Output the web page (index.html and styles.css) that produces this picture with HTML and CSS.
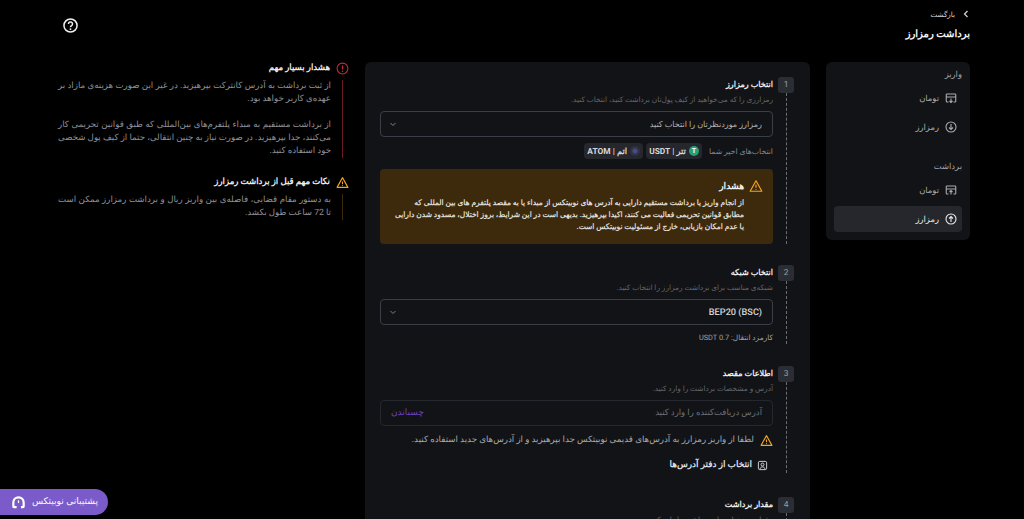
FILE: index.html
```html
<!DOCTYPE html>
<html lang="fa" dir="rtl">
<head>
<meta charset="utf-8">
<title>برداشت رمزارز</title>
<link rel="stylesheet" href="styles.css">
</head>
<body>
<svg class="defs" width="0" height="0" aria-hidden="true">
  <defs>
    <symbol id="warn" viewBox="0 0 24 24"><path d="M12 3 2 21h20L12 3Z" fill="none" stroke="currentColor" stroke-width="2" stroke-linejoin="round"/><path d="M12 10v5M12 17.2v1.3" stroke="currentColor" stroke-width="2" fill="none"/></symbol>
    <symbol id="chev" viewBox="0 0 12 12"><path d="M3.500 5 6 7.500 8.500 5" fill="none" stroke="currentColor" stroke-width="1"/></symbol>
    <symbol id="card-down" viewBox="0 0 24 24"><path d="M17 20h3a1.500 1.500 0 0 0 1.500-1.500V5.500A1.500 1.500 0 0 0 20 4H4a1.500 1.500 0 0 0-1.500 1.500v13A1.500 1.500 0 0 0 4 20h3M2.500 10h19M12 13v8M9 18l3 3 3-3" fill="none" stroke="currentColor" stroke-width="2.200"/></symbol>
    <symbol id="card-up" viewBox="0 0 24 24"><path d="M17 20h3a1.500 1.500 0 0 0 1.500-1.500V5.500A1.500 1.500 0 0 0 20 4H4a1.500 1.500 0 0 0-1.500 1.500v13A1.500 1.500 0 0 0 4 20h3M2.500 10h19M12 21v-8M9 16l3-3 3 3" fill="none" stroke="currentColor" stroke-width="2.200"/></symbol>
    <symbol id="circle-down" viewBox="0 0 24 24"><circle cx="12" cy="12" r="10" fill="none" stroke="currentColor" stroke-width="2.200"/><path d="M12 6v11M8 13l4 4 4-4" fill="none" stroke="currentColor" stroke-width="2.200"/></symbol>
    <symbol id="circle-up" viewBox="0 0 24 24"><circle cx="12" cy="12" r="10" fill="none" stroke="currentColor" stroke-width="2.200"/><path d="M12 18V7M8 11l4-4 4 4" fill="none" stroke="currentColor" stroke-width="2.200"/></symbol>
  </defs>
</svg>

<div class="page">
  <aside class="side">
    <header class="head">
      <a class="back"><svg class="back-ico" viewBox="0 0 8 8"><path d="M5.500 1 2.500 4l3 3" fill="none" stroke="currentColor" stroke-width="1.200"/></svg><span>بازگشت</span></a>
      <h1 class="title">برداشت رمزارز</h1>
    </header>
    <nav class="menu">
      <div class="menu-label">واریز</div>
      <a class="menu-item"><svg class="menu-ico"><use href="#card-down"/></svg><span>تومان</span></a>
      <a class="menu-item"><svg class="menu-ico"><use href="#circle-down"/></svg><span>رمزارز</span></a>
      <div class="menu-label second">برداشت</div>
      <a class="menu-item"><svg class="menu-ico"><use href="#card-up"/></svg><span>تومان</span></a>
      <a class="menu-item active"><svg class="menu-ico"><use href="#circle-up"/></svg><span>رمزارز</span></a>
    </nav>
  </aside>

  <main class="card">
    <section class="step">
      <div class="rail"><span class="num">1</span></div>
      <div class="body">
        <h2 class="step-title">انتخاب رمزارز</h2>
        <p class="hint">رمزارزی را که می‌خواهید از کیف پول‌تان برداشت کنید، انتخاب کنید.</p>
        <div class="field"><span class="value muted">رمزارز موردنظرتان را انتخاب کنید</span><svg class="chev"><use href="#chev"/></svg></div>
        <div class="recent">
          <span class="recent-label">انتخاب‌های اخیر شما</span>
          <span class="chip"><i class="coin usdt">T</i>تتر | USDT</span>
          <span class="chip"><i class="coin atom"></i>اتم | ATOM</span>
        </div>
        <div class="alert">
          <div class="alert-head"><svg class="alert-ico"><use href="#warn"/></svg><strong>هشدار</strong></div>
          <p class="alert-text">از انجام واریز یا برداشت مستقیم دارایی به آدرس های نوبیتکس از مبداء یا به مقصد پلتفرم های بین المللی که مطابق قوانین تحریمی فعالیت می کنند، اکیدا بپرهیزید. بدیهی است در این شرایط، بروز اختلال، مسدود شدن دارایی یا عدم امکان بازیابی، خارج از مسئولیت نوبیتکس است.</p>
        </div>
      </div>
    </section>

    <section class="step">
      <div class="rail"><span class="num">2</span></div>
      <div class="body">
        <h2 class="step-title">انتخاب شبکه</h2>
        <p class="hint">شبکه‌ی مناسب برای برداشت رمزارز را انتخاب کنید.</p>
        <div class="field"><span class="value" dir="ltr">BEP20 (BSC)</span><svg class="chev"><use href="#chev"/></svg></div>
        <p class="fee">کارمزد انتقال: <span dir="ltr">USDT 0.7</span></p>
      </div>
    </section>

    <section class="step">
      <div class="rail"><span class="num">3</span></div>
      <div class="body">
        <h2 class="step-title">اطلاعات مقصد</h2>
        <p class="hint">آدرس و مشخصات برداشت را وارد کنید.</p>
        <div class="field dim"><span class="value faint">آدرس دریافت‌کننده را وارد کنید</span><span class="paste">چسباندن</span></div>
        <div class="note"><svg class="note-ico"><use href="#warn"/></svg><span>لطفا از واریز رمزارز به آدرس‌های قدیمی نوبیتکس جدا بپرهیزید و از آدرس‌های جدید استفاده کنید.</span></div>
        <a class="book">
          <svg class="book-ico" viewBox="0 0 24 24"><rect x="3" y="3" width="18" height="18" rx="3" fill="none" stroke="currentColor" stroke-width="2"/><circle cx="12" cy="10" r="3.200" fill="none" stroke="currentColor" stroke-width="2"/><path d="M6.500 20c.6-3.500 2.800-5 5.500-5s4.900 1.500 5.500 5" fill="none" stroke="currentColor" stroke-width="2"/></svg>
          <span>انتخاب از دفتر آدرس‌ها</span>
        </a>
      </div>
    </section>

    <section class="step">
      <div class="rail"><span class="num">4</span></div>
      <div class="body">
        <h2 class="step-title">مقدار برداشت</h2>
        <p class="hint">مقدار موردنظر برای برداشت را وارد کنید.</p>
      </div>
    </section>
  </main>

  <aside class="notes">
    <div class="help-row">
      <svg class="help" viewBox="0 0 24 24"><circle cx="12" cy="12" r="10.500" fill="none" stroke="currentColor" stroke-width="2.400"/><path d="M8.800 9.500a3.200 3.200 0 1 1 4.900 2.700c-1.100.7-1.700 1.300-1.700 2.600" fill="none" stroke="currentColor" stroke-width="2.400"/><circle cx="12" cy="17.800" r="1.400" fill="currentColor"/></svg>
    </div>
    <section class="notice">
      <div class="notice-head">
        <svg class="notice-ico red" viewBox="0 0 24 24"><circle cx="12" cy="12" r="10" fill="none" stroke="currentColor" stroke-width="2"/><path d="M12 6.500v7" stroke="currentColor" stroke-width="2.400"/><circle cx="12" cy="17" r="1.500" fill="currentColor"/></svg>
        <h3 class="notice-title">هشدار بسیار مهم</h3>
      </div>
      <div class="notice-body red-line">
        <p>از ثبت برداشت به آدرس کانترکت بپرهیزید. در غیر این صورت هزینه‌ی مازاد بر عهده‌ی کاربر خواهد بود.</p>
        <p>از برداشت مستقیم به مبداء پلتفرم‌های بین‌المللی که طبق قوانین تحریمی کار می‌کنند، جدا بپرهیزید. در صورت نیاز به چنین انتقالی، حتما از کیف پول شخصی خود استفاده کنید.</p>
      </div>
    </section>
    <section class="notice">
      <div class="notice-head">
        <svg class="notice-ico amber"><use href="#warn"/></svg>
        <h3 class="notice-title">نکات مهم قبل از برداشت رمزارز</h3>
      </div>
      <div class="notice-body amber-line">
        <p>به دستور مقام قضایی، فاصله‌ی بین واریز ریال و برداشت رمزارز ممکن است تا 72 ساعت طول بکشد.</p>
      </div>
    </section>
  </aside>
</div>

<a class="support">
  <span class="support-text">پشتیبانی نوبیتکس</span>
  <svg class="support-ico" viewBox="0 0 24 24"><path fill-rule="evenodd" d="M12 2a10 10 0 0 1 10 10v6c0 2-1 3-3 3h-3v-3.500h2.500V12a6.500 6.500 0 0 0-13 0v5.500H9V21H5c-2 0-3-1-3-3v-6A10 10 0 0 1 12 2Z" fill="currentColor"/><path d="M12 8.500V13" stroke="currentColor" stroke-width="2"/></svg>
</a>
</body>
</html>
```

FILE: styles.css
```css
* { box-sizing: border-box; }
html, body { height: 100%; }
body {
  margin: 0;
  background: #000;
  color: #e8e8ea;
  font-family: Roboto, "Noto Sans", sans-serif;
  font-size: 8.400px;
  text-rendering: geometricPrecision;
  overflow: hidden;
}
p, h1, h2, h3 { margin: 0; }
.defs { position: absolute; }
.page {
  display: flex;
  align-items: flex-start;
  gap: 16px;
  padding: 0 54px 0 0;
  height: 519px;
  overflow: hidden;
}

/* right column */
.side { width: 144px; flex: none; }
.head { height: 62px; padding-top: 8px; }
.back { display: flex; align-items: center; gap: 7px; color: #d5d5d8; font-size: 7.200px; height: 12px; }
.back-ico { width: 8px; height: 8px; }
.title { font-size: 10px; font-weight: 700; color: #f4f4f5; margin-top: 6px; line-height: 18px; }
.menu {
  background: #121316;
  border-radius: 6px;
  padding: 7px 8px 8px;
  height: 178px;
}
.menu-label { font-size: 8.400px; color: #a1a3a9; line-height: 12px; height: 13px; }
.menu-label.second { margin-top: 21px; }
.menu-item {
  display: flex;
  align-items: center;
  gap: 6px;
  height: 26px;
  margin-top: 3px;
  padding: 0 5px;
  border-radius: 4px;
  color: #a9abb0;
  font-size: 8.400px;
}
.menu-item.active { background: #25272c; color: #e8e8ea; font-weight: 500; }
.menu-ico { width: 12px; height: 12px; flex: none; }

/* main card */
.card {
  width: 445px;
  flex: none;
  margin-top: 62px;
  background: #121316;
  border-radius: 6px;
  padding: 15px 16px 0 15px;
  height: 600px;
}
.step { display: flex; gap: 5px; }
.rail { width: 16px; flex: none; display: flex; flex-direction: column; align-items: center; position: relative; }
.rail::after {
  content: "";
  flex: 1;
  border-right: 1px dashed #6a6d74;
}
.num {
  width: 16px; height: 16px; flex: none;
  background: #2a2d33;
  border-radius: 3px;
  color: #9a9da4;
  font-size: 8.400px;
  display: flex; align-items: center; justify-content: center;
}
.body { width: 393px; }
.step-title { font-size: 8.100px; font-weight: 700; line-height: 14px; color: #eeeef0; }
.hint { font-size: 7.400px; color: #62656c; line-height: 12px; margin-top: 3px; }
.field {
  display: flex;
  align-items: center;
  justify-content: space-between;
  height: 26px;
  margin-top: 5px;
  padding: 0 10px;
  border: 1px solid #3a3e46;
  border-radius: 4px;
}
.field.dim { border-color: #25272e; }
.value { font-size: 9.200px; color: #d5d6d9; font-weight: 500; }
.value.muted { font-size: 8.100px; color: #b0b2b7; font-weight: 400; }
.value.faint { font-size: 8.500px; color: #6e7178; font-weight: 400; }
.chev { width: 12px; height: 12px; color: #7d8087; margin-left: -4px; }
.paste { color: #6f42c1; font-size: 9px; font-weight: 500; }
.recent { display: flex; align-items: center; height: 16px; margin-top: 6px; font-size: 7.700px; }
.recent-label { color: #85888e; margin-left: 7px; }
.chip {
  display: flex; align-items: center; gap: 3px;
  height: 16px; margin-left: 3px; padding: 0 3px;
  background: #25272c; border-radius: 4px;
  color: #d5d6d9; font-weight: 700; font-size: 8.400px;
}
.coin {
  width: 10px; height: 10px; border-radius: 50%;
  display: flex; align-items: center; justify-content: center;
  font-style: normal; font-size: 7px; color: #fff; font-weight: 700;
}
.usdt { background: #26a17b; }
.atom { background: radial-gradient(circle, #4a4d78 0 25%, #2e3148 45%); }
.alert {
  margin-top: 10px;
  background: #3d2a0d;
  border-radius: 4px;
  height: 75px;
  padding: 10px 29px 0 14px;
}
.alert-head { display: flex; align-items: center; gap: 5px; margin-right: -19px; height: 14px; }
.alert-ico { width: 14px; height: 14px; color: #f4a522; flex: none; }
.alert-head strong { font-size: 9.200px; color: #f0f0f0; }
.alert-text { font-size: 7.500px; font-weight: 700; line-height: 12px; color: #dedcd6; margin-top: 4px; }
.step:nth-of-type(1) { padding-bottom: 21px; }
.step:nth-of-type(2) { padding-bottom: 22px; }
.step:nth-of-type(3) { padding-bottom: 24px; }
.fee { font-size: 7.400px; color: #a1a3a9; margin-top: 7px; line-height: 12px; }
.note { display: flex; align-items: center; gap: 6px; margin-top: 6px; height: 16px; font-size: 8.700px; color: #a9abb0; }
.note-ico { width: 13px; height: 13px; color: #f4a522; flex: none; }
.book { display: flex; align-items: center; gap: 5px; margin-top: 9px; padding-right: 5px; height: 16px; font-size: 8.900px; font-weight: 700; color: #dedee1; }
.book-ico { width: 11px; height: 11px; flex: none; }

/* left column */
.notes { width: 292px; flex: none; }
.help-row { height: 62px; padding-top: 18px; padding-left: 6px; display: flex; justify-content: flex-end; }
.help { width: 15px; height: 15px; color: #f0f0f0; }
.notice-head { display: flex; align-items: center; gap: 6px; height: 12px; }
.notice-ico { width: 13px; height: 13px; flex: none; }
.notice-ico.red { color: #c5283d; }
.notice-ico.amber { color: #f4a522; }
.notice-title { font-size: 8.600px; font-weight: 700; color: #eeeef0; }
.notice-body { margin: 6px 6px 0 0; padding: 0 11px 0 0; width: 285px; font-size: 8.650px; line-height: 13px; color: #8f929a; text-align: justify; border-right: 1px solid; }
.notice-body p + p { margin-top: 13px; }
.red-line { border-color: #6e1a25; }
.amber-line { border-color: #3d2a0d; }
.notice + .notice { margin-top: 18px; }

/* floating support button */
.support {
  position: fixed;
  left: 0; bottom: 4px;
  height: 26px; width: 108px;
  display: flex; align-items: center; gap: 6px;
  padding: 0 10px 0 0;
  background: #7a5bc9;
  border-radius: 0 13px 13px 0;
  color: #fff;
  font-size: 9.150px;
  font-weight: 500;
}
.support-text { white-space: nowrap; }
.support-ico { width: 15px; height: 15px; flex: none; }
```
